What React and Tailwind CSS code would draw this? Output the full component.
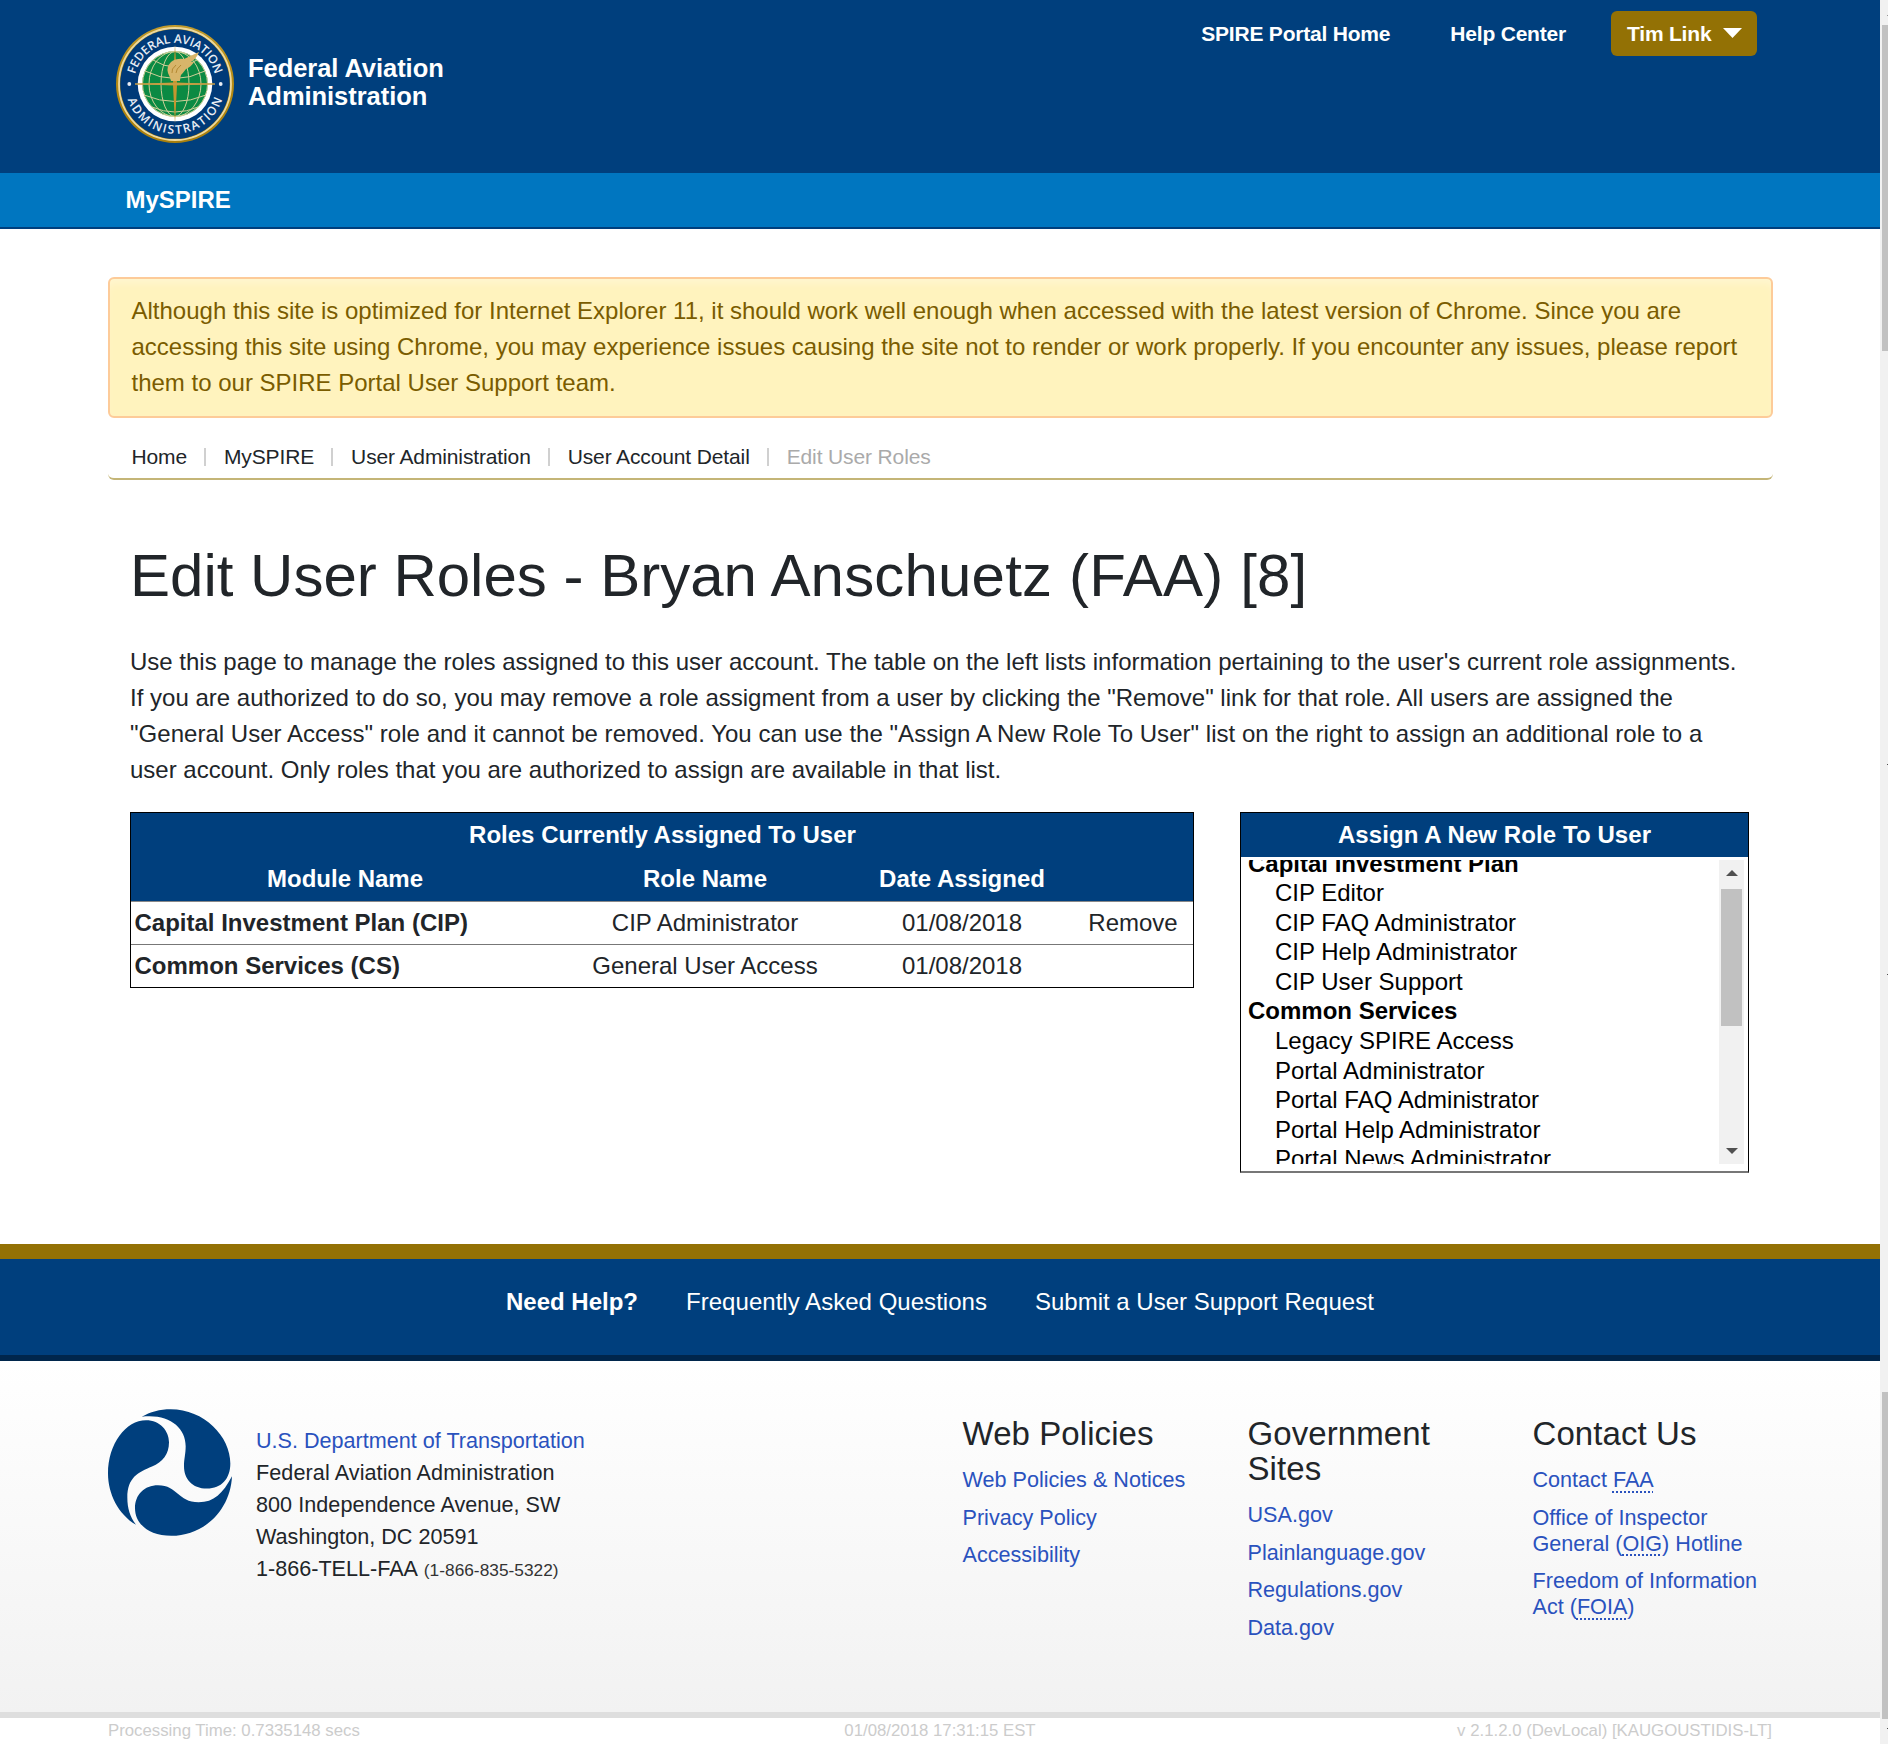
import React from "react";

function FaaSeal({ className }) {
  return (
    <svg viewBox="0 0 120 120" className={className} aria-label="Federal Aviation Administration seal">
      <defs>
        <path id="sealTop" d="M19 60 A41 41 0 0 1 101 60" />
        <path id="sealBottom" d="M10.200 60 A49.800 49.800 0 0 0 109.800 60" />
        <linearGradient id="sealGold" x1="0" y1="0" x2="0" y2="1">
          <stop offset="0" stopColor="#c09a2c" />
          <stop offset="0.5" stopColor="#b58a12" />
          <stop offset="1" stopColor="#a87f0c" />
        </linearGradient>
      </defs>
      <circle cx="60" cy="60" r="59" fill="url(#sealGold)" />
      <circle cx="60" cy="60" r="56" fill="none" stroke="#ecd9a0" strokeWidth="1.800" />
      <circle cx="60" cy="60" r="54.800" fill="#003a78" />
      <circle cx="60" cy="60" r="37.300" fill="#fff" />
      <circle cx="60" cy="60" r="32.800" fill="#0b8a43" />
      <g fill="none" stroke="#cfcf98" strokeWidth="1">
        <circle cx="60" cy="60" r="32.500" />
        <ellipse cx="60" cy="60" rx="14" ry="32.500" />
        <ellipse cx="60" cy="60" rx="26" ry="32.500" />
        <path d="M38 36 Q60 50 82 36 M30 47 Q60 62 90 47 M29 71 Q60 84 91 71 M37 83 Q60 93 83 83" />
      </g>
      <path d="M60 20 L62 58.500 L100 60 L62 61.500 L60 100 L58 61.500 L20 60 L58 58.500 Z" fill="#c4962f" />
      <path d="M20 60 H100" stroke="#c9a14a" strokeWidth="1.600" />
      <path d="M56 57 Q55 53 53 49 Q51 43 56 38 Q61 34 69 35 L84 28 Q82 34 76 38 L79 38 Q76 43 71 45 Q68 49 66 51 Q65 54 65 57 Z" fill="#d8b56a" />
      <path d="M61 41 Q56 45 57 49 M66 41 Q61 45 61 49" fill="none" stroke="#a97d25" strokeWidth="0.800" />
      <circle cx="14.300" cy="60" r="1.900" fill="#e9eef5" />
      <circle cx="105.700" cy="60" r="1.900" fill="#e9eef5" />
      <g fill="#e9eef5" fontFamily="'Open Sans', sans-serif" fontWeight="600" fontSize="12" textAnchor="middle">
        <text><textPath href="#sealTop" startOffset="50%" textLength="109">FEDERAL AVIATION</textPath></text>
        <text><textPath href="#sealBottom" startOffset="50%" textLength="125">ADMINISTRATION</textPath></text>
      </g>
    </svg>
  );
}

function DotLogo() {
  return (
    <svg viewBox="54 57 372 380" className="h-[127px] w-[124px] shrink-0" fill="#003f7d" aria-label="U.S. Department of Transportation">
      <path d="M155 80 C180 65 210 57 242 57 C342 57 421 138 421 220 C421 266 394 295 351 295 C306 295 282 265 282 228 C282 205 287 192 287 168 C287 112 236 70 155 80 Z" />
      <path d="M138 404 C84 372 54 310 54 250 C54 160 108 90 168 90 C210 90 237 122 237 156 C237 192 218 215 186 229 C145 246 112 262 112 322 C112 355 120 380 138 404 Z" />
      <path d="M426 258 C421 362 340 437 244 437 C178 437 135 402 135 354 C135 313 163 285 204 285 C264 285 262 336 326 336 C372 336 398 310 426 258 Z" />
    </svg>
  );
}

const options = [
  ["Capital Investment Plan", true],
  ["CIP Editor", false],
  ["CIP FAQ Administrator", false],
  ["CIP Help Administrator", false],
  ["CIP User Support", false],
  ["Common Services", true],
  ["Legacy SPIRE Access", false],
  ["Portal Administrator", false],
  ["Portal FAQ Administrator", false],
  ["Portal Help Administrator", false],
  ["Portal News Administrator", false],
];

const crumbs = ["Home", "MySPIRE", "User Administration", "User Account Detail"];

function Abbr({ children }) {
  return <span className="underline decoration-dotted decoration-2 underline-offset-4">{children}</span>;
}

function FooterColumn({ title, children }) {
  return (
    <div className="mt-[7px] w-[285px]">
      <h2 className="text-[33px] leading-[35px] tracking-[0.080px]">{title}</h2>
      <ul className="mt-[16px] space-y-[11.600px] text-[21.600px] leading-[26px] text-[#2a52be]">{children}</ul>
    </div>
  );
}

export default function App() {
  return (
    <div className="flex h-[1744px] w-[1888px] overflow-hidden bg-white font-['Liberation_Sans',Arial,sans-serif] text-[24px] leading-[36px] text-[#212529]">
      <div className="w-[1880px] shrink-0">
        <header className="h-[173px] bg-[#003f7d] text-white">
          <div className="mx-auto flex w-[1664px] justify-between">
            <div className="flex pl-[7px] pt-[24px]">
              <FaaSeal className="h-[120px] w-[120px] shrink-0" />
              <div className="ml-[13px] pt-[30px] text-[25.500px] font-bold leading-[28px] tracking-[-0.050px]">Federal Aviation<br />Administration</div>
            </div>
            <nav className="mr-[15px] mt-[11px] flex h-[45px] items-center text-[21px] font-bold tracking-[-0.200px]">
              <a className="mr-[60px]">SPIRE Portal Home</a>
              <a className="mr-[45px]">Help Center</a>
              <button className="flex h-[45px] w-[146px] items-center rounded-[6px] bg-[#937105] pl-[16px]">
                Tim Link
                <svg viewBox="0 0 19 10" className="mb-[2px] ml-[12px] h-[10px] w-[19px]"><path d="M0 0H19L9.500 10Z" fill="#fff" /></svg>
              </button>
            </nav>
          </div>
        </header>
        <div className="h-[56px] border-b-2 border-[#003f7d] bg-[#0076c0] pl-[125.500px] pt-[9px] font-bold text-white">MySPIRE</div>
        <main className="mx-auto h-[1015px] w-[1664px] pt-[48px]">
          <div className="h-[141px] w-[1665px] rounded-[6px] border-2 border-[#fdcb99] bg-[#fff3be] px-[21.500px] pt-[14px] text-[#7a5c00] shadow-[inset_0_8px_8px_-4px_rgba(255,255,255,0.3)]">
            Although this site is optimized for Internet Explorer 11, it should work well enough when accessed with the latest version of Chrome. Since you are<br />
            accessing this site using Chrome, you may experience issues causing the site not to render or work properly. If you encounter any issues, please report<br />
            them to our SPIRE Portal User Support team.
          </div>
          <div className="flex h-[62px] w-[1665px] items-center rounded-[6px] border-b-2 border-[#c4b577] pl-[23.500px] pt-[17px] text-[21px] tracking-[-0.130px]">
            {crumbs.map((c) => (
              <React.Fragment key={c}>
                <span>{c}</span>
                <i className="ml-[17px] mr-[18px] h-[18px] w-[2px] bg-[#d0d0d0]" />
              </React.Fragment>
            ))}
            <span className="text-[#aaa]">Edit User Roles</span>
          </div>
          <div className="px-[22px]">
            <h1 className="mt-[60px] text-[60px] leading-[72px]">Edit User Roles - Bryan<span className="tracking-[0.180px]"> Anschuetz (FAA) [8]</span></h1>
            <p className="mt-[32px] whitespace-nowrap">
              Use this page to manage the roles assigned to this user account. The table on the left lists information pertaining to the user's current role assignments.<br />
              <span className="tracking-[0.008px]">If you are authorized to do so, you may remove a role assigment from a user by clicking the "Remove" link for that role. All users are assigned the</span><br />
              <span className="tracking-[0.030px]">"General User Access" role and it cannot be removed. You can use the "Assign A New Role To User" list on the right to assign an additional role to a</span><br />
              user account. Only roles that you are authorized to assign are available in that list.
            </p>
            <div className="mr-px mt-[24px] flex items-start justify-between">
              <div className="h-[176px] w-[1064px] border border-black text-center">
                <div className="h-[44px] bg-[#003f7d] pl-px pt-[4px] font-bold text-white">Roles Currently Assigned To User</div>
                <div className="grid h-[45px] grid-cols-[428px_292px_222px_120px] border-b border-[#888] bg-[#003f7d] pt-[4px] font-bold text-white">
                  <span>Module Name</span><span>Role Name</span><span>Date Assigned</span>
                </div>
                <div className="grid h-[43px] grid-cols-[428px_292px_222px_120px] border-b border-[#777] pt-[3px]">
                  <b className="pl-[3.500px] text-left">Capital Investment Plan (CIP)</b><span>CIP Administrator</span><span>01/08/2018</span><span>Remove</span>
                </div>
                <div className="grid h-[42px] grid-cols-[428px_292px_222px_120px] pt-[3px]">
                  <b className="pl-[3.500px] text-left">Common Services (CS)</b><span>General User Access</span><span>01/08/2018</span>
                </div>
              </div>
              <div className="h-[361px] w-[509px] border border-b-2 border-black border-b-[#777] text-black">
                <div className="h-[44px] bg-[#003f7d] pt-[4px] text-center font-bold tracking-[0.080px] text-white">Assign A New Role To User</div>
                <div className="mt-[3px] flex h-[304px] justify-between overflow-hidden pl-[7px] pr-[4px]">
                  <ul className="-mt-[11.500px] leading-[29.600px]">
                    {options.map(([label, group]) => (
                      <li key={label} className={group ? "font-bold" : "pl-[27px]"}>{label}</li>
                    ))}
                  </ul>
                  <div className="flex h-[304px] w-[25px] flex-col items-center bg-[#f1f1f1]">
                    <svg viewBox="0 0 12 6" className="mt-[10px] h-[6px] w-[12px]"><path d="M0 6H12L6 0Z" fill="#505050" /></svg>
                    <div className="mt-[13px] h-[137px] w-[21px] bg-[#c1c1c1]" />
                    <svg viewBox="0 0 12 6" className="mb-[10px] mt-auto h-[6px] w-[12px]"><path d="M0 0H12L6 6Z" fill="#505050" /></svg>
                  </div>
                </div>
              </div>
            </div>
          </div>
        </main>
        <section className="flex h-[117px] gap-[48px] border-b-[6px] border-t-[15px] border-b-[#00264c] border-t-[#937105] bg-[#003f7d] pl-[506px] pt-[25px] text-white">
          <b>Need Help?</b><span className="tracking-[0.030px]">Frequently Asked Questions</span><span>Submit a User Support Request</span>
        </section>
        <footer className="h-[357px] border-b-[6px] border-[#dedede] bg-linear-to-b from-white to-[#f2f2f2] pl-[108px] pt-[48px]">
          <div className="flex">
            <DotLogo />
            <address className="ml-[24px] mt-[16px] w-[706.500px] text-[21.600px] not-italic leading-[32px]">
              <span className="text-[#2a52be]">U.S. Department of Transportation</span><br />
              <span className="tracking-[0.080px]">Federal Aviation Administration</span><br /><span className="tracking-[0.040px]">800 Independence Avenue, SW</span><br />Washington, DC 20591<br />1-866-TELL-FAA <small className="ml-px text-[17.280px] text-[#333] tracking-[0.020px]">(1-866-835-5322)</small>
            </address>
            <FooterColumn title="Web Policies">
              <li>Web Policies &amp; Notices</li><li>Privacy Policy</li><li>Accessibility</li>
            </FooterColumn>
            <FooterColumn title={<>Government<br />Sites</>}>
              <li>USA.gov</li><li>Plainlanguage.gov</li><li>Regulations.gov</li><li>Data.gov</li>
            </FooterColumn>
            <FooterColumn title="Contact Us">
              <li>Contact <Abbr>FAA</Abbr></li>
              <li>Office of Inspector<br />General (<Abbr>OIG</Abbr>) Hotline</li>
              <li>Freedom of Information<br />Act (<Abbr>FOIA</Abbr>)</li>
            </FooterColumn>
          </div>
        </footer>
        <div className="mx-auto grid w-[1664px] grid-cols-3 text-[16.800px] leading-[26px] text-[#ccc]">
          <span>Processing Time: 0.7335148 secs</span><span className="text-center">01/08/2018 17:31:15 EST</span><span className="text-right">v 2.1.2.0 (DevLocal) [KAUGOUSTIDIS-LT]</span>
        </div>
      </div>
      <div className="flex w-[8px] flex-col items-end bg-[#f1f1f1]">
        <div className="mt-[15px] h-px w-px bg-[#999]" />
        <div className="mt-[9px] h-[326px] w-[6px] bg-[#c1c1c1]" />
        <div className="mt-[413px] h-px w-px bg-[#505050]" />
        <div className="mt-[209px] h-px w-px bg-[#505050]" />
        <div className="mt-[417px] h-[327px] w-[6px] bg-[#c1c1c1]" />
        <div className="mt-[9px] h-px w-px bg-[#505050]" />
      </div>
    </div>
  );
}
